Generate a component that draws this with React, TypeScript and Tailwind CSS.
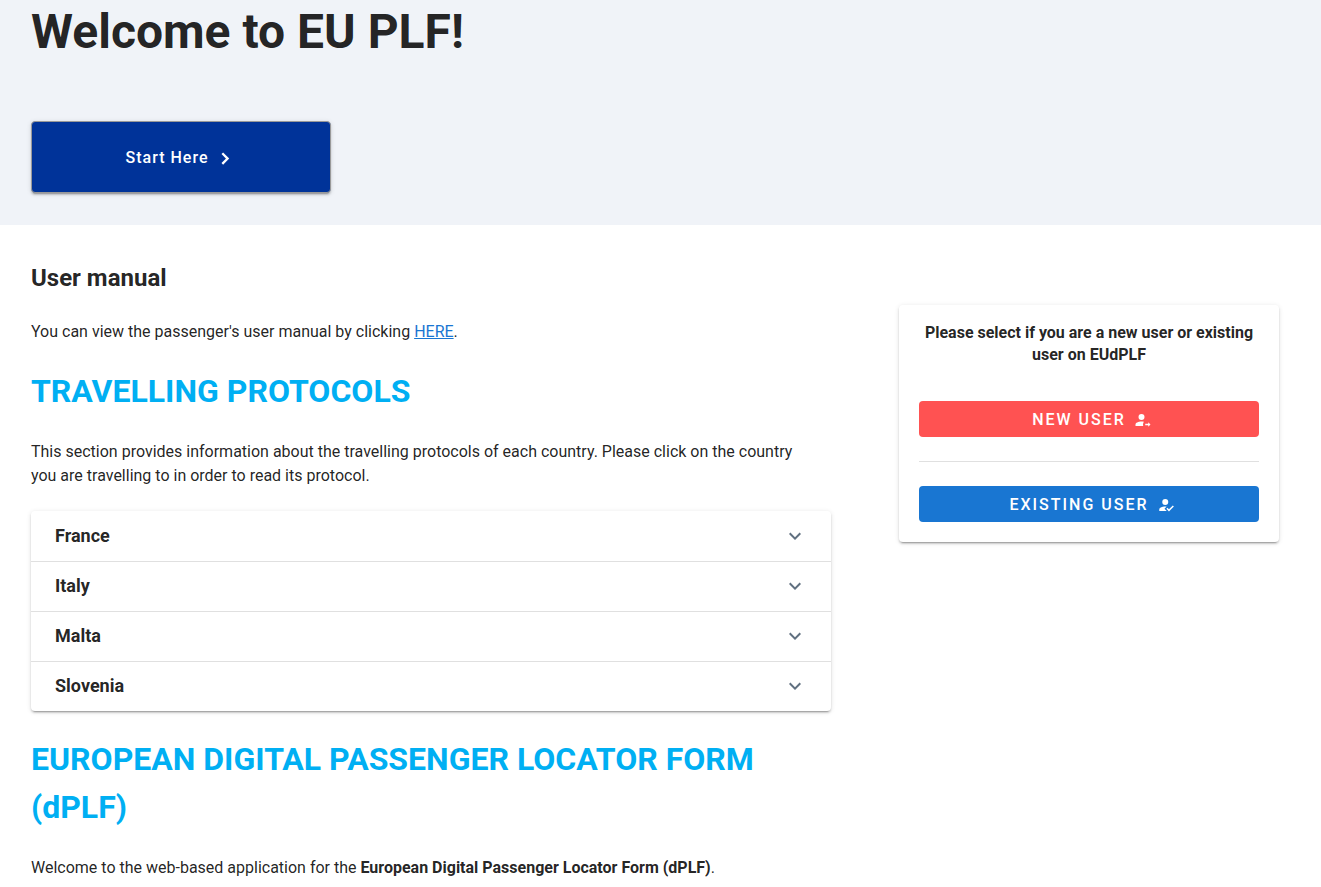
import React from 'react';
import { MdExpandMore } from 'react-icons/md';

const countries = ['France', 'Italy', 'Malta', 'Slovenia'];

const elevation =
  'shadow-[0_3px_1px_-2px_rgba(0,0,0,0.2),0_2px_2px_0_rgba(0,0,0,0.14),0_1px_5px_0_rgba(0,0,0,0.12)]';

const SectionTitle: React.FC<{ children: React.ReactNode }> = ({ children }) => (
  <h2 className="mb-[25px] text-[32px] leading-12 font-bold text-[#00aff3]">{children}</h2>
);

const CountryPanel: React.FC<{ name: string }> = ({ name }) => (
  <button
    type="button"
    aria-expanded={false}
    className="flex h-[50px] w-full items-center justify-between border-t border-black/12 px-6 pb-0.5 text-left text-lg font-bold first:border-transparent"
  >
    {name}
    <MdExpandMore className="h-6 w-6 text-[#607080]" />
  </button>
);

const ChevronIcon: React.FC = () => (
  <svg viewBox="0 0 24 24" className="h-6 w-6" fill="none" aria-hidden="true">
    <path d="M9.3,7.3L14.6,12.6L9.3,17.9" stroke="currentColor" strokeWidth="2.3" />
  </svg>
);

const UserArrowIcon: React.FC = () => (
  <svg viewBox="0 0 24 24" className="h-[18px] w-[18px]" fill="currentColor" aria-hidden="true">
    <path d="M19,21V19H15V17H19V15L22,18L19,21M10,4A4,4 0 0,1 14,8A4,4 0 0,1 10,12A4,4 0 0,1 6,8A4,4 0 0,1 10,4M10,14C11.15,14 12.25,14.12 13.24,14.34C12.46,15.35 12,16.62 12,18C12,18.7 12.12,19.37 12.34,20H2V18C2,15.79 5.58,14 10,14Z" />
  </svg>
);

const UserCheckIcon: React.FC = () => (
  <svg viewBox="0 0 24 24" className="h-[18px] w-[18px]" fill="currentColor" aria-hidden="true">
    <path d="M21.1,12.5L22.5,13.91L15.97,20.5L12.5,17L13.9,15.59L15.97,17.67L21.1,12.5M10,17L13,20H3V18C3,15.79 6.58,14 11,14L12.89,14.11L10,17M11,4A4,4 0 0,1 15,8A4,4 0 0,1 11,12A4,4 0 0,1 7,8A4,4 0 0,1 11,4Z" />
  </svg>
);

export default function App() {
  return (
    <div className="font-[Roboto,sans-serif] text-base leading-6 text-black/87">
      <header className="bg-[#f0f3f8] px-[31px] pb-8">
        <h1 className="pb-[57px] text-5xl leading-[64px] font-bold">Welcome to EU PLF!</h1>
        <button
          type="button"
          className={`flex h-[72px] w-[300px] items-center justify-center gap-1 rounded-sm border border-[#999] bg-[#003399] pt-0.5 font-medium tracking-[1px] text-white ${elevation}`}
        >
          Start Here
          <ChevronIcon />
        </button>
      </header>

      <div className="flex items-start justify-between gap-12 pr-[42px] pl-[31px]">
        <main className="max-w-[800px] flex-1 pt-[35px]">
          <h2 className="mb-6 text-2xl leading-9 font-bold">User manual</h2>
          <p className="mb-[23px]">
            You can view the passenger's user manual by clicking{' '}
            <a href="#manual" className="text-[#1976d2] underline">HERE</a>.
          </p>
          <SectionTitle>TRAVELLING PROTOCOLS</SectionTitle>
          <p className="mb-[23px] pr-4">
            This section provides information about the travelling protocols of each country. Please click on the
            country you are travelling to in order to read its protocol.
          </p>

          <div className={`mb-6 rounded ${elevation}`}>
            {countries.map(name => (
              <CountryPanel key={name} name={name} />
            ))}
          </div>

          <SectionTitle>EUROPEAN DIGITAL PASSENGER LOCATOR FORM (dPLF)</SectionTitle>
          <p>
            Welcome to the web-based application for the <strong>European Digital Passenger Locator Form (dPLF)</strong>.
          </p>
        </main>

        <aside className={`mt-20 w-[380px] shrink-0 rounded px-5 pt-[17px] pb-5 ${elevation}`}>
          <p className="text-center leading-[22px] font-bold">
            Please select if you are a new user or existing user on EUdPLF
          </p>
          <button
            type="button"
            className="mt-[35px] flex h-9 w-full items-center justify-center gap-2 rounded bg-[#ff5252] pt-px pl-1.5 font-medium tracking-[2px] text-white"
          >
            NEW USER
            <UserArrowIcon />
          </button>
          <hr className="my-6 border-black/12" />
          <button
            type="button"
            className="flex h-9 w-full items-center justify-center gap-2 rounded bg-[#1976d2] pt-px pl-1.5 font-medium tracking-[2px] text-white"
          >
            EXISTING USER
            <UserCheckIcon />
          </button>
        </aside>
      </div>
    </div>
  );
}
